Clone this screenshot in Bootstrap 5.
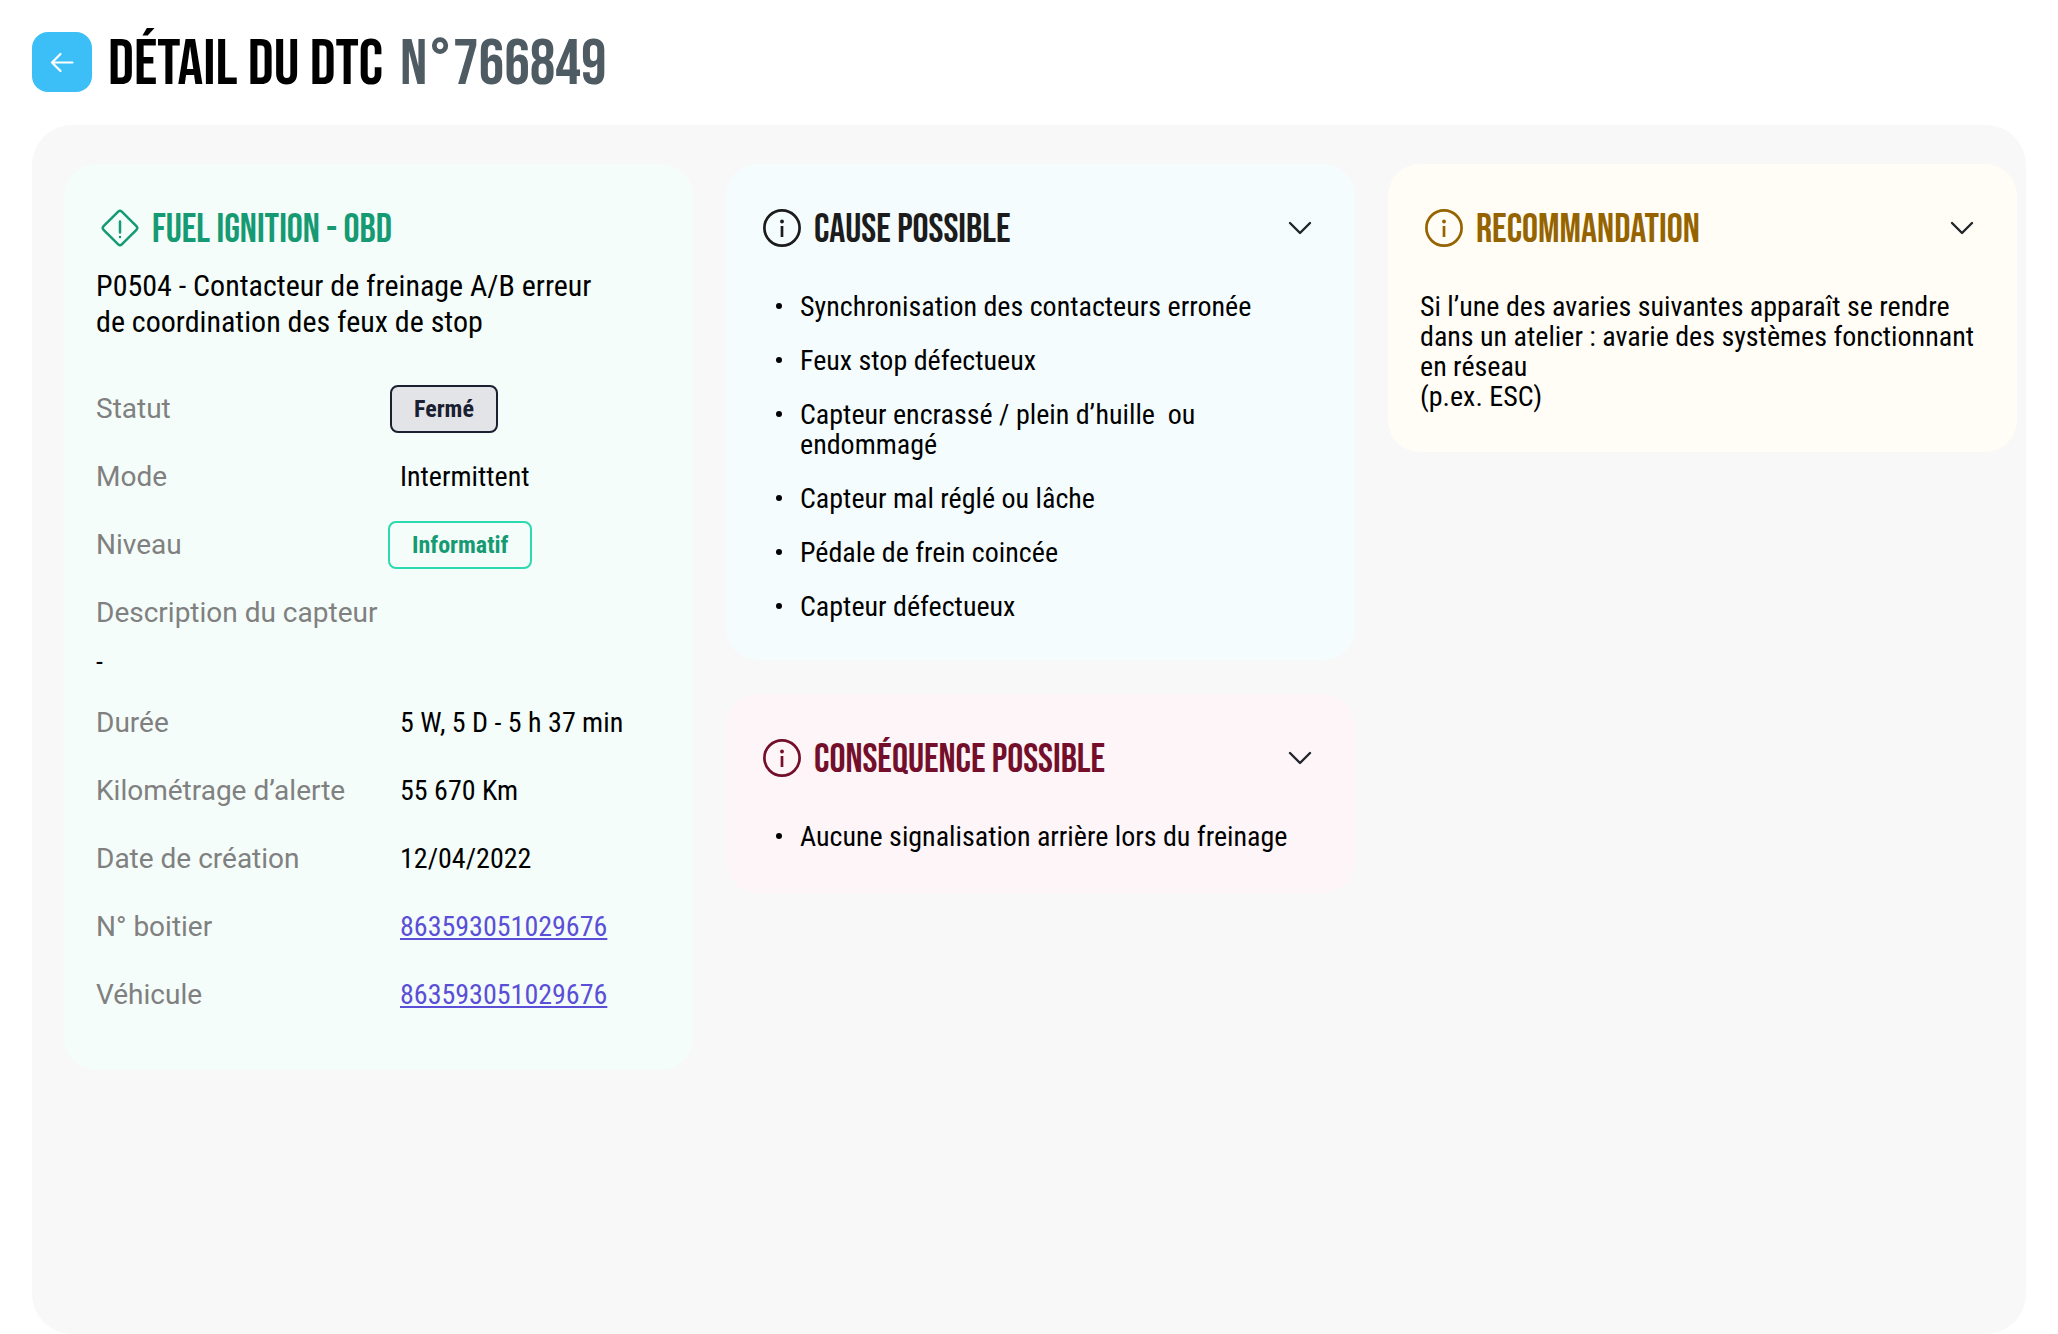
<!DOCTYPE html><html lang="fr"><head><meta charset="utf-8"><title>Détail du DTC</title><link rel="stylesheet" href="https://cdn.jsdelivr.net/npm/bootstrap@5.3.0/dist/css/bootstrap.min.css">
<style>
html,body{height:100%}
body{background:#fff;color:#000;font-family:"Roboto Condensed",Roboto,sans-serif;font-size:28px;line-height:30px;overflow:hidden}
.page-head{height:125px;padding:32px 32px 0;gap:16px}
.back-btn{width:60px;height:60px;background:#3bbff6;border:0;border-radius:16px;padding:0}
.page-title{font-family:"Bebas Neue",sans-serif;font-size:64px;line-height:60px;font-weight:400;margin:0;padding-top:3px;gap:17px;color:#000}
.page-num{color:#4f5b62}
.panel{height:1209px;margin:0 32px;padding:39px 9px 0 32px;background:#f8f8f8;border-radius:40px;gap:33px}
.pane{flex:1 1 0;min-width:0;gap:34px}
.tile{border-radius:32px;padding:45px 43px 41px 32px}
.tile-green{background:#f4fdf9;padding-bottom:41px}
.tile-blue{background:#f5fcfe;padding-bottom:38px}
.tile-red{background:#fdf5f8;padding-bottom:41px}
.tile-amber{background:#fffdf6;padding-bottom:40px}
.tile-head{height:38px;padding-left:5px}
.tile-head h2{font-family:"Bebas Neue",sans-serif;font-size:40px;line-height:38px;font-weight:400;margin:0 0 0 13px;padding-top:4px}
.c-green{color:#159a73}.c-dark{color:#1c1c1c}.c-red{color:#730f2a}.c-amber{color:#956400}
.tile-sub{font-size:30px;line-height:36px;margin:21px 0 35px}
.info-row{height:68px}
.info-label{flex:0 0 304px;font-family:Roboto,sans-serif;color:#808080}
.dash{height:42px}
.chip{font-size:24px;font-weight:700;line-height:44px;height:48px;padding:0 22px;border:2px solid;border-radius:8px}
.chip-grey{margin-left:-10px;background:#e2e4e8;border-color:#1a2030;color:#1a2030}
.chip-green{margin-left:-12px;background:#f4fdf9;border-color:#2dd9ae;color:#159a73}
.info-row a{color:#5b4fd8}
.bul{margin:45px 0 0;padding-left:42px;list-style:none;gap:24px}
.bul li::before{content:"";display:inline-block;width:6px;height:6px;border-radius:50%;background:#000;margin:0 18px 7px -24px}
.plain{margin:45px 0 0}
</style></head><body>
<header class="page-head d-flex align-items-start">
<button class="back-btn d-flex align-items-center justify-content-center" aria-label="Retour"><svg width="24" height="21" viewBox="0 0 24 21" fill="none" stroke="#fff" stroke-width="2.2" stroke-linecap="round" stroke-linejoin="round"><path d="M22.500 10.500H2M10.500 2 2 10.500 10.500 19"/></svg></button>
<h1 class="page-title d-flex"><span>DÉTAIL DU DTC</span><span class="page-num">N°766849</span></h1>
</header>
<main class="panel d-flex align-items-start">
<div class="pane d-flex flex-column">
<section class="tile tile-green">
<div class="tile-head d-flex align-items-center">
<svg width="38" height="38" viewBox="0 0 38 38" fill="none" stroke="#159a73" stroke-width="2.5" stroke-linecap="round" stroke-linejoin="round" class="flex-shrink-0"><path d="M17.2 2.6a2.6 2.6 0 0 1 3.6 0l14.6 14.6a2.6 2.6 0 0 1 0 3.6L20.800 35.400a2.6 2.6 0 0 1-3.600 0L2.600 20.800a2.600 2.600 0 0 1 0-3.600z"/><path d="M19 12.500v11M19 28v.1"/></svg>
<h2 class="c-green">FUEL IGNITION - OBD</h2></div>
<p class="tile-sub">P0504 - Contacteur de freinage A/B erreur<br>de coordination des feux de stop</p>
<div class="info-row d-flex align-items-center"><div class="info-label">Statut</div><div><span class="chip chip-grey d-inline-block">Fermé</span></div></div>
<div class="info-row d-flex align-items-center"><div class="info-label">Mode</div><div>Intermittent</div></div>
<div class="info-row d-flex align-items-center"><div class="info-label">Niveau</div><div><span class="chip chip-green d-inline-block">Informatif</span></div></div>
<div class="info-row d-flex align-items-center"><div class="info-label">Description du capteur</div></div>
<div class="dash">-</div>
<div class="info-row d-flex align-items-center"><div class="info-label">Durée</div><div>5 W, 5 D - 5 h 37 min</div></div>
<div class="info-row d-flex align-items-center"><div class="info-label">Kilométrage d’alerte</div><div>55 670 Km</div></div>
<div class="info-row d-flex align-items-center"><div class="info-label">Date de création</div><div>12/04/2022</div></div>
<div class="info-row d-flex align-items-center"><div class="info-label">N° boitier</div><div><a href="#">863593051029676</a></div></div>
<div class="info-row d-flex align-items-center"><div class="info-label">Véhicule</div><div><a href="#">863593051029676</a></div></div>
</section>
</div>
<div class="pane d-flex flex-column">
<section class="tile tile-blue">
<div class="tile-head d-flex align-items-center">
<svg width="38" height="38" viewBox="0 0 38 38" fill="none" stroke="#1c1c1c" stroke-width="2.7" class="flex-shrink-0"><circle cx="19" cy="19" r="17.600"/><path d="M19 17v11"/><circle cx="19" cy="12.500" r="1.900" fill="#1c1c1c" stroke="none"/></svg>
<h2 class="c-dark flex-grow-1">CAUSE POSSIBLE</h2>
<svg width="24" height="14" viewBox="0 0 24 14" fill="none" stroke="#212529" stroke-width="2.4" stroke-linecap="round" stroke-linejoin="round" class="flex-shrink-0"><path d="m2 2 10 10L22 2"/></svg></div>
<ul class="bul d-flex flex-column">
<li>Synchronisation des contacteurs erronée</li>
<li>Feux stop défectueux</li>
<li>Capteur encrassé / plein d’huille&nbsp; ou endommagé</li>
<li>Capteur mal réglé ou lâche</li>
<li>Pédale de frein coincée</li>
<li>Capteur défectueux</li>
</ul>
</section>
<section class="tile tile-red">
<div class="tile-head d-flex align-items-center">
<svg width="38" height="38" viewBox="0 0 38 38" fill="none" stroke="#730f2a" stroke-width="2.7" class="flex-shrink-0"><circle cx="19" cy="19" r="17.600"/><path d="M19 17v11"/><circle cx="19" cy="12.500" r="1.900" fill="#730f2a" stroke="none"/></svg>
<h2 class="c-red flex-grow-1">CONSÉQUENCE POSSIBLE</h2>
<svg width="24" height="14" viewBox="0 0 24 14" fill="none" stroke="#212529" stroke-width="2.4" stroke-linecap="round" stroke-linejoin="round" class="flex-shrink-0"><path d="m2 2 10 10L22 2"/></svg></div>
<ul class="bul d-flex flex-column"><li>Aucune signalisation arrière lors du freinage</li></ul>
</section>
</div>
<div class="pane d-flex flex-column">
<section class="tile tile-amber">
<div class="tile-head d-flex align-items-center">
<svg width="38" height="38" viewBox="0 0 38 38" fill="none" stroke="#956400" stroke-width="2.7" class="flex-shrink-0"><circle cx="19" cy="19" r="17.600"/><path d="M19 17v11"/><circle cx="19" cy="12.500" r="1.900" fill="#956400" stroke="none"/></svg>
<h2 class="c-amber flex-grow-1">RECOMMANDATION</h2>
<svg width="24" height="14" viewBox="0 0 24 14" fill="none" stroke="#212529" stroke-width="2.4" stroke-linecap="round" stroke-linejoin="round" class="flex-shrink-0"><path d="m2 2 10 10L22 2"/></svg></div>
<p class="plain">Si l’une des avaries suivantes apparaît se rendre dans un atelier : avarie des systèmes fonctionnant en réseau<br>(p.ex. ESC)</p>
</section>
</div>
</main>
</body></html>
